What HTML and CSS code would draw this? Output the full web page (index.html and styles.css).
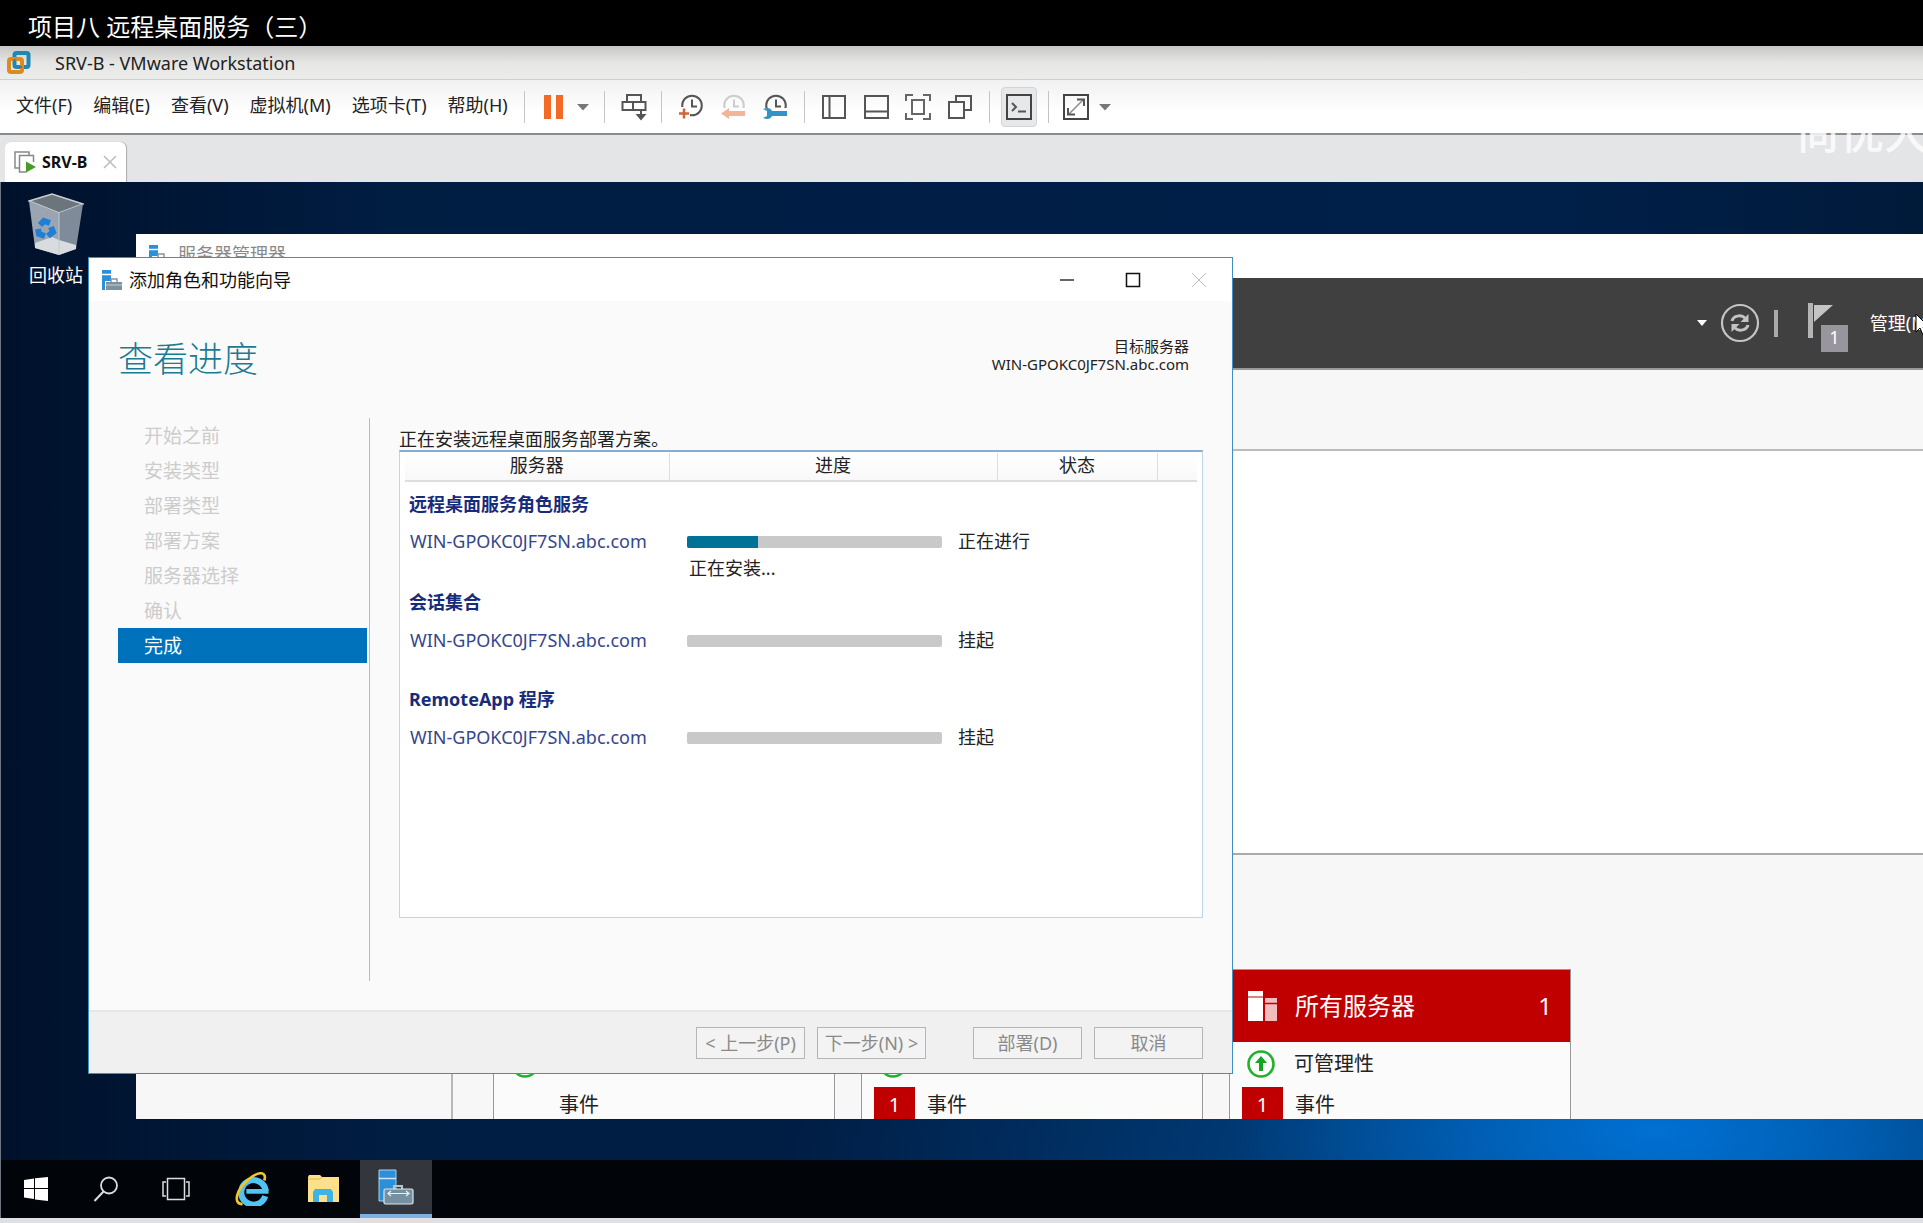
FILE: index.html
```html
<!DOCTYPE html>
<html lang="zh-CN">
<head>
<meta charset="utf-8">
<title>SRV-B - VMware Workstation</title>
<link rel="stylesheet" href="styles.css">
</head>
<body>
<svg class="defs" aria-hidden="true">
  <symbol id="server-kit" viewBox="0 0 36 36">
    <path d="M1 1h17v31H1z" fill="#2b8fd9" stroke="#a9d2f0"/><path d="M1 9.500h17" stroke="#cfe6f7" stroke-width="1.500"/>
    <path d="M16 20v-3h8v3" fill="none" stroke="#b5c4cd" stroke-width="2"/>
    <rect x="6" y="20" width="29" height="15" rx="1.500" fill="#7590a0" stroke="#dde6ea" stroke-width="1.200"/>
    <path d="M10 24.500h21M13 22l-3 2.500 3 2.500M28 22l3 2.500-3 2.500" fill="none" stroke="#e8f0f4" stroke-width="1.200"/>
  </symbol>
  <symbol id="server-kit-small" viewBox="0 0 22 22">
    <path d="M1 1h9v20H1z" fill="#2b8fd9"/><path d="M1 5.500h9" stroke="#fff" stroke-width="1.500"/>
    <path d="M4 12h18v10H4z" fill="#fff"/>
    <path d="M10 13v-3h6v3" fill="none" stroke="#8297a3" stroke-width="1.500"/>
    <path d="M5 13h16v8H5z" fill="#7d929e"/><path d="M5 16h16" stroke="#c5d0d6"/>
  </symbol>
  <symbol id="up-circle" viewBox="0 0 30 30">
    <circle cx="15" cy="15" r="12.500" fill="#fff" stroke="#1fb32b" stroke-width="2.600"/>
    <path d="M15 7l6 7h-4v8h-4v-8H9z" fill="#12a51f"/>
  </symbol>
  <symbol id="clock" viewBox="0 0 26 28">
    <circle cx="14" cy="12.500" r="9.800" fill="none" stroke="currentColor" stroke-width="2"/>
    <path d="M14 6.500v7h5" fill="none" stroke="currentColor" stroke-width="2"/>
  </symbol>
</svg>

<header class="caption">项目八 远程桌面服务（三）</header>

<div class="app">
  <div class="app-title">
    <svg class="vm-logo" viewBox="0 0 24 24"><rect x="7.500" y="2" width="14" height="14" rx="2" fill="none" stroke="#1f87b5" stroke-width="4"/><rect x="2" y="8" width="13" height="13" rx="2" fill="none" stroke="#e08a1e" stroke-width="4"/><path d="M7.500 8v8h7.500" fill="none" stroke="#1f87b5" stroke-width="2"/></svg>
    <span>SRV-B - VMware Workstation</span>
  </div>

  <div class="toolbar">
    <nav class="menu">
      <button>文件(F)</button><button>编辑(E)</button><button>查看(V)</button><button>虚拟机(M)</button><button>选项卡(T)</button><button>帮助(H)</button>
    </nav>
    <div class="group g-pause">
      <button aria-label="暂停"><svg class="i-pause" viewBox="0 0 20 26"><path d="M0 1h7v24H0zM12 1h7v24h-7z" fill="#f26a26"/></svg></button>
      <button aria-label="电源选项"><svg class="i-drop" viewBox="0 0 12 8"><path d="M0 1h12L6 7.500z" fill="#777"/></svg></button>
    </div>
    <div class="group g-send">
      <button aria-label="发送按键"><svg class="ico" viewBox="0 0 26 28"><path d="M6 8.500V2h14v6.500M1.500 9h10.500v8H1.500zM12 9h12.500v8H12zM6 9h14" fill="none" stroke="#555" stroke-width="2"/><path d="M20 17v7" stroke="#555" stroke-width="2"/><path d="M14.500 21h11L20 27.500z" fill="#555"/></svg></button>
    </div>
    <div class="group g-snap">
      <button aria-label="拍摄快照"><svg class="ico dark" viewBox="0 0 26 28"><use href="#clock"/><path d="M0 14h12v12H0z" fill="#fff"/><path d="M6 15.500v10M1 20.500h10" stroke="#d4633a" stroke-width="2.500"/></svg></button>
      <button aria-label="恢复快照" disabled><svg class="ico pale" viewBox="0 0 26 28"><use href="#clock"/><path d="M0 15h26v13H0z" fill="#fff"/><path d="M1 20.500l8-5.500v3h16v5H9v3z" fill="#f4b49a"/></svg></button>
      <button aria-label="管理快照"><svg class="ico dark" viewBox="0 0 26 28"><use href="#clock"/><path d="M0 15h26v13H0z" fill="#fff"/><path d="M1 16c4-2 8-1 9 2h15v5H10c-1 3-5 4-9 2l4-2v-5z" fill="#3193cb"/></svg></button>
    </div>
    <div class="group g-view">
      <button aria-label="库"><svg class="ico" viewBox="0 0 26 28"><path d="M2 3h22v22H2zM8.500 3v22" fill="none" stroke="#555" stroke-width="2"/></svg></button>
      <button aria-label="缩略图栏"><svg class="ico" viewBox="0 0 26 28"><path d="M2 3h23v22H2zM2 18.500h23" fill="none" stroke="#555" stroke-width="2"/></svg></button>
      <button aria-label="全屏"><svg class="ico" viewBox="0 0 26 28"><path d="M1 8V2h7M18 2h7v6M25 20v6h-7M8 26H1v-6M7 7h12v14H7z" fill="none" stroke="#666" stroke-width="2"/></svg></button>
      <button aria-label="Unity"><svg class="ico" viewBox="0 0 26 28"><path d="M9 9V3h15v14h-7M2 9h15v16H2z" fill="none" stroke="#555" stroke-width="2"/></svg></button>
    </div>
    <div class="group g-console">
      <button class="pressed" aria-label="控制台"><svg class="ico" viewBox="0 0 26 28"><path d="M1 2h24v24H1z" fill="none" stroke="#444" stroke-width="2"/><path d="M6 10l4 4-4 4M12 18.500h8" fill="none" stroke="#555" stroke-width="2"/></svg></button>
    </div>
    <div class="group g-fit">
      <button aria-label="自由拉伸"><svg class="ico" viewBox="0 0 26 28"><path d="M1 2h24v24H1z" fill="none" stroke="#444" stroke-width="2"/><path d="M6 21L20 7" stroke="#888" stroke-width="1.500"/><path d="M14 6.500h7V13M5 15v6.500h7" fill="none" stroke="#555" stroke-width="2"/></svg></button>
      <button aria-label="拉伸选项"><svg class="i-drop" viewBox="0 0 12 8"><path d="M0 1h12L6 7.500z" fill="#777"/></svg></button>
    </div>
  </div>

  <div class="tabs">
    <div class="tab">
      <svg class="tab-ico" viewBox="0 0 22 22"><path d="M5 17H1V1h14v3" fill="none" stroke="#888" stroke-width="1.500"/><path d="M19.500 11V4.500h-14V21h7" fill="none" stroke="#888" stroke-width="1.500"/><path d="M12 10.500l10 5.500-10 5.500z" fill="#4a9a2a"/></svg>
      <span>SRV-B</span>
      <button aria-label="关闭标签"><svg viewBox="0 0 14 14"><path d="M1 1l12 12M13 1L1 13" stroke="#bbb" stroke-width="1.500"/></svg></button>
    </div>
  </div>
  <div class="watermark">尚优大</div>

  <main class="desktop">
    <a class="recycle" href="#">
      <svg viewBox="0 0 56 64"><path d="M1 8L24 1l31 10-24 9z" fill="#6c747c" stroke="#c9cfd4" stroke-width="1.500"/><path d="M1 8l30 12v42L7 55z" fill="#9aa5b1"/><path d="M55 11L31 20v42l17-6z" fill="#7f8b98"/><path d="M7 50l17-6 7 3 17 5v4l-17 6-24-7z" fill="#d8dcdf"/><path d="M31 20v42" stroke="#c2c9d0"/><g fill="none" stroke="#1f7fd6" stroke-width="6"><path d="M12 32l4-4 6 2"/><path d="M10 36l1 5 6 2"/><path d="M23 34l2 5-5 4"/></g></svg>
      <span>回收站</span>
    </a>

    <section class="manager">
      <div class="manager-title"><svg><use href="#server-kit-small"/></svg><span>服务器管理器</span></div>
      <div class="manager-bar">
        <svg class="m-drop" viewBox="0 0 12 8"><path d="M1 1h10L6 7z" fill="#fff"/></svg>
        <svg class="m-refresh" viewBox="0 0 40 40"><circle cx="20" cy="20" r="18" fill="none" stroke="#c4c4c4" stroke-width="2.200"/><path d="M12 18c1-5 9-7 13-3M28 22c-1 5-9 7-13 3" fill="none" stroke="#c4c4c4" stroke-width="3"/><path d="M28.500 11v8h-8zM11.500 29v-8h8z" fill="#c4c4c4"/></svg>
        <i class="m-sep"></i>
        <div class="m-flag"><svg viewBox="0 0 26 36"><path d="M0 0h5v35H0z" fill="#b5b5b5"/><path d="M6 2h19L6 19z" fill="#c4c4c4"/></svg><b>1</b></div>
        <button>管理(M)</button>
      </div>
      <div class="manager-crumb"></div>
      <div class="manager-welcome"></div>
      <div class="manager-body">
        <div class="side"></div>
        <div class="card">
          <div class="card-head"></div>
          <div class="card-row"><svg><use href="#up-circle"/></svg><span>可管理性</span></div>
          <div class="card-row"><span class="num none"></span><span>事件</span></div>
        </div>
        <div class="card">
          <div class="card-head"></div>
          <div class="card-row"><svg><use href="#up-circle"/></svg><span>可管理性</span></div>
          <div class="card-row"><span class="num">1</span><span>事件</span></div>
        </div>
        <div class="card">
          <div class="card-head"><svg viewBox="0 0 30 30"><path d="M0 0h15v30H0z" fill="#fff"/><path d="M0 6h15" stroke="#c00000"/><path d="M17 7h12v23H17z" fill="#f2bcbc"/><path d="M17 12.500h12" stroke="#c00000" stroke-width="1.500"/></svg><span>所有服务器</span><span class="count">1</span></div>
          <div class="card-row"><svg><use href="#up-circle"/></svg><span>可管理性</span></div>
          <div class="card-row"><span class="num">1</span><span>事件</span></div>
        </div>
      </div>
    </section>

    <section class="wizard">
      <div class="wizard-title">
        <svg class="kit"><use href="#server-kit-small"/></svg>
        <span>添加角色和功能向导</span>
        <button aria-label="最小化"><svg viewBox="0 0 16 16"><path d="M1 8h14" stroke="#333" stroke-width="1.500"/></svg></button>
        <button aria-label="最大化"><svg viewBox="0 0 16 16"><path d="M1.500 1.500h13v13h-13z" fill="none" stroke="#111" stroke-width="1.500"/></svg></button>
        <button aria-label="关闭" disabled><svg viewBox="0 0 16 16"><path d="M1 1l14 14M15 1L1 15" stroke="#bbb"/></svg></button>
      </div>
      <div class="wizard-head">
        <h1>查看进度</h1>
        <p>目标服务器<br>WIN-GPOKC0JF7SN.abc.com</p>
      </div>
      <div class="wizard-main">
        <ol class="steps">
          <li>开始之前</li><li>安装类型</li><li>部署类型</li><li>部署方案</li><li>服务器选择</li><li>确认</li><li class="on">完成</li>
        </ol>
        <div class="pane">
          <p>正在安装远程桌面服务部署方案。</p>
          <div class="list">
            <table>
              <colgroup><col class="c-server"><col class="c-bar"><col class="c-gap"><col class="c-state"><col></colgroup>
              <thead><tr><th>服务器</th><th colspan="2">进度</th><th>状态</th><th></th></tr></thead>
              <tbody>
                <tr class="sect"><th colspan="5">远程桌面服务角色服务</th></tr>
                <tr class="job"><td>WIN-GPOKC0JF7SN.abc.com</td><td><div class="track"><i style="width:28%"></i></div><span>正在安装...</span></td><td colspan="3">正在进行</td></tr>
                <tr class="sect"><th colspan="5">会话集合</th></tr>
                <tr class="job"><td>WIN-GPOKC0JF7SN.abc.com</td><td><div class="track"></div></td><td colspan="3">挂起</td></tr>
                <tr class="sect"><th colspan="5">RemoteApp 程序</th></tr>
                <tr class="job"><td>WIN-GPOKC0JF7SN.abc.com</td><td><div class="track"></div></td><td colspan="3">挂起</td></tr>
              </tbody>
            </table>
          </div>
        </div>
      </div>
      <div class="wizard-foot">
        <button disabled>&lt; 上一步(P)</button><button disabled>下一步(N) &gt;</button><button class="apart" disabled>部署(D)</button><button disabled>取消</button>
      </div>
    </section>
    <svg class="cursor" viewBox="0 0 16 24"><path d="M1 1v18l4-4 3 7 3-1-3-7h6z" fill="#fff" stroke="#000"/></svg>
  </main>

  <footer class="taskbar">
    <button aria-label="开始"><svg width="24" height="24" viewBox="0 0 24 24"><path d="M0 3l10-1.500V11H0zM11 1.300L24 0v11H11zM0 12h10v10L0 20.500zM11 12h13v12l-13-1.500z" fill="#fff"/></svg></button>
    <button aria-label="搜索"><svg width="26" height="26" viewBox="0 0 26 26"><circle cx="16" cy="9.500" r="8" fill="none" stroke="#ddd" stroke-width="1.800"/><path d="M10.500 15.500L1.500 25" stroke="#ddd" stroke-width="2"/></svg></button>
    <button aria-label="任务视图"><svg width="28" height="24" viewBox="0 0 28 24"><path d="M5.500 1.500h17v21h-17zM4 5H1v14h3M24 5h3v14h-3" fill="none" stroke="#ddd" stroke-width="1.500"/></svg></button>
    <button class="pin first" aria-label="Internet Explorer"><svg width="34" height="34" viewBox="0 0 36 36"><path d="M32 25.500A13 13 0 1 1 32.500 20" fill="none" stroke="#51c4f2" stroke-width="6.500"/><path d="M12 20.500h23.500" stroke="#51c4f2" stroke-width="5"/><path d="M8 34C-3 34 2 18 14 8S34 0 31 9" fill="none" stroke="#f3c52d" stroke-width="2.800"/></svg></button>
    <button class="pin" aria-label="文件资源管理器"><svg width="32" height="28" viewBox="0 0 32 28"><path d="M0 2l1-2h11l2 2h17v25H0z" fill="#fde08a"/><path d="M0 4h12l2-2" fill="none" stroke="#e3b94a"/><path d="M5 27V17l2-3h16l2 3v10h-6v-7h-8v7z" fill="#3db4e5"/></svg></button>
    <button class="pin active" aria-label="服务器管理器"><svg width="36" height="36"><use href="#server-kit"/></svg></button>
  </footer>
</div>
</body>
</html>
```
FILE: styles.css
```css
* { box-sizing: border-box; }
body {
  margin: 0;
  min-height: 100vh;
  display: flex;
  flex-direction: column;
  background: #dfe0e4;
  font: 18px/24px "Noto Sans", "Noto Sans CJK SC", sans-serif;
  color: #222;
  overflow: hidden;
}
button { padding: 0; border: 0; background: none; font: inherit; color: inherit; display: flex; align-items: center; justify-content: center; }
svg { display: block; flex: none; }
p, h1, ol { margin: 0; padding: 0; }
.defs { position: absolute; width: 0; height: 0; }

.caption { height: 46px; padding: 15px 28px 0; background: #000; color: #fff; font-size: 24px; line-height: 24px; }

.app { position: relative; flex: 1; display: flex; flex-direction: column; padding-bottom: 5px; }
.app-title { height: 34px; padding-left: 7px; display: flex; align-items: center; gap: 24px; background: linear-gradient(#c6c6c6, #e6e6e4 50%, #ececea); border-bottom: 1px solid #d0d0d0; }
.vm-logo { width: 24px; height: 24px; }

.toolbar { height: 55px; display: flex; align-items: center; padding-left: 16px; background: linear-gradient(#f1f1f1, #fff 60%); border-bottom: 2px solid #8c8c8c; }
.menu { display: flex; gap: 21px; margin-right: 16px; padding-bottom: 3px; }
.group { height: 32px; display: flex; align-items: center; gap: 16px; padding: 0 16px; border-left: 1px solid #c4c4c4; }
.ico { width: 26px; height: 28px; }
.dark { color: #555; }
.pale { color: #ccc; }
.i-pause { width: 20px; height: 26px; }
.i-drop { width: 12px; height: 8px; }
.g-pause { padding-left: 19px; padding-right: 15px; gap: 13px; }
.g-send { padding-right: 14px; }
.g-console { padding: 0 11px; }
.g-fit { padding-left: 14px; gap: 10px; }
.pressed { width: 36px; height: 40px; border: 1px solid #d2d4d6; border-radius: 4px; background: #e7e8ea; }

.tabs { height: 47px; padding: 7px 0 0 5px; background: #e4e5e7; }
.tab { width: 121px; height: 40px; padding: 0 9px; display: flex; align-items: center; gap: 6px; background: #fff; border-radius: 6px 6px 0 0; box-shadow: 1px 0 1px #aaa; font-size: 16px; font-weight: 700; color: #111; }
.tab-ico { width: 22px; height: 22px; }
.tab button { margin-left: auto; }
.tab button svg { width: 14px; height: 14px; }
.watermark { position: absolute; top: 62px; right: -5px; font-size: 44px; line-height: 48px; font-weight: 500; color: #fff; opacity: .8; }

.desktop {
  position: relative; flex: 1; overflow: hidden; border-left: 1px solid #6d7480;
  background:
    radial-gradient(ellipse 420px 160px at 86% 97%, #0070d2, transparent),
    radial-gradient(ellipse 900px 300px at 88% 100%, #00539f, transparent),
    linear-gradient(90deg, #00112b, #001d42 20%, #00204a 80%, #001a3a);
}
.recycle { position: absolute; left: 20px; top: 11px; width: 70px; display: flex; flex-direction: column; align-items: center; gap: 6px; color: #fff; text-decoration: none; }
.recycle svg { width: 56px; height: 64px; }

.manager { position: absolute; left: 135px; right: 0; top: 52px; bottom: 41px; display: flex; flex-direction: column; overflow: hidden; background: #f7f7f7; }
.manager > div { flex: none; }
.manager-title { height: 44px; padding: 10px 12px; display: flex; gap: 8px; background: #fff; color: #888; line-height: 20px; }
.manager-title svg { width: 22px; height: 22px; }
.manager-bar { height: 92px; display: flex; align-items: center; justify-content: flex-end; background: #404040; color: #fff; border-bottom: 2px solid #999; overflow: hidden; }
.manager-bar button { margin-right: -10px; }
.m-drop { width: 12px; height: 8px; margin-right: 12px; }
.m-refresh { width: 40px; height: 40px; margin-right: 14px; }
.m-sep { width: 4px; height: 27px; background: #aaa; margin-right: 30px; }
.m-flag { position: relative; width: 40px; height: 48px; margin-right: 22px; padding-top: 4px; }
.m-flag svg { width: 26px; height: 36px; }
.m-flag b { position: absolute; right: 0; bottom: -5px; width: 27px; height: 27px; background: #98959c; text-align: center; font-weight: 400; }
.manager-crumb { height: 81px; border-bottom: 2px solid #bbb; }
.manager-welcome { height: 404px; background: #fff; border-bottom: 2px solid #aaa; }
.manager-body { display: flex; gap: 26px; }
.side { width: 317px; border-right: 2px solid #b8b8b8; margin-right: 14px; }
.card { width: 342px; flex: none; margin-top: 114px; border: 1px solid #999; border-bottom: 0; background: #fbfbfb; font-size: 20px; }
.card-head { height: 72px; display: flex; align-items: center; gap: 17px; padding: 0 18px; background: #c00000; color: #fff; font-size: 24px; }
.card-head svg { width: 30px; height: 30px; }
.count { margin-left: auto; }
.card-row { height: 44px; display: flex; align-items: center; padding-left: 12px; }
.card-row svg { width: 30px; height: 30px; margin: 0 18px 0 4px; }
.card-row + .card-row { height: 38px; }
.num { width: 41px; height: 36px; margin-right: 12px; background: #c00000; color: #fff; text-align: center; line-height: 36px; }
.none { background: none; }

.wizard { position: absolute; left: 87px; top: 75px; width: 1145px; height: 817px; display: flex; flex-direction: column; border: 1px solid #3f8fc4; background: #fafafa; }
.wizard-title { height: 43px; padding-left: 12px; display: flex; align-items: center; background: #fff; color: #111; }
.wizard-title .kit { width: 22px; height: 22px; margin-right: 6px; }
.wizard-title button { width: 66px; height: 40px; }
.wizard-title button svg { width: 16px; height: 16px; }
.wizard-title span { margin-right: auto; }
.wizard-head { height: 117px; display: flex; justify-content: space-between; padding: 35px 43px 0 29px; }
h1 { font-size: 35px; line-height: 46px; font-weight: 300; color: #1c7a92; }
.wizard-head p { font-size: 15px; line-height: 18px; text-align: right; padding-top: 1px; }
.wizard-main { flex: 1; display: flex; padding: 0 29px; }
.steps { width: 252px; height: 563px; padding-right: 2px; list-style: none; border-right: 1px solid #bbb; font-size: 19px; line-height: 36px; color: #ccc; }
.steps li { height: 35px; padding-left: 26px; }
.steps .on { background: #0072bb; color: #fff; }
.pane { flex: 1; margin-left: 29px; padding-top: 10px; }
.pane > p { line-height: 22px; }
.list { height: 468px; padding: 1px 5px; background: #fff; border: 1px solid #bdd7ea; border-top: 2px solid #86aed0; }
table { width: 100%; table-layout: fixed; border-collapse: collapse; }
th, td { padding: 0; vertical-align: top; text-align: left; }
.c-server { width: 264px; }
.c-bar { width: 289px; }
.c-gap { width: 39px; }
.c-state { width: 160px; }
thead th { height: 28px; text-align: center; font-weight: 400; border-right: 1px solid #ddd; border-bottom: 2px solid #ddd; background: linear-gradient(#fff, #f8f8f8); }
thead th:last-child { border-right: 0; }
.sect { height: 44px; color: #172b7c; }
.sect th { padding: 10px 0 0 4px; font-weight: 700; }
.job { height: 53px; }
.job td { padding-top: 4px; color: #222; }
.job td:first-child { padding-left: 5px; color: #36468c; }
.job td:nth-child(2) { padding-left: 18px; }
.track { width: 255px; height: 12px; margin: 7px 0 8px; border-radius: 2px; background: #c9c9c9; overflow: hidden; }
.track i { display: block; height: 100%; background: #007296; }
.track + span { padding-left: 2px; }
.wizard-foot { height: 63px; padding-right: 29px; display: flex; align-items: center; justify-content: flex-end; gap: 12px; background: #f0f0f0; border-top: 2px solid #e6e6e6; }
.wizard-foot button { width: 109px; height: 32px; border: 1px solid #b5b5b5; background: #f3f3f3; color: #8a8a8a; white-space: nowrap; }
.wizard-foot .apart { margin-left: 35px; }
.cursor { position: absolute; right: -8px; top: 131px; width: 16px; height: 24px; }

.taskbar { height: 58px; display: flex; background: #010409; border-left: 1px solid #6d7480; }
.taskbar button { width: 70px; height: 58px; }
.taskbar .pin { width: 72px; }
.taskbar .first { margin-left: 5px; }
.taskbar .active { background: #33363d; border-bottom: 4px solid #7db0de; }
```
